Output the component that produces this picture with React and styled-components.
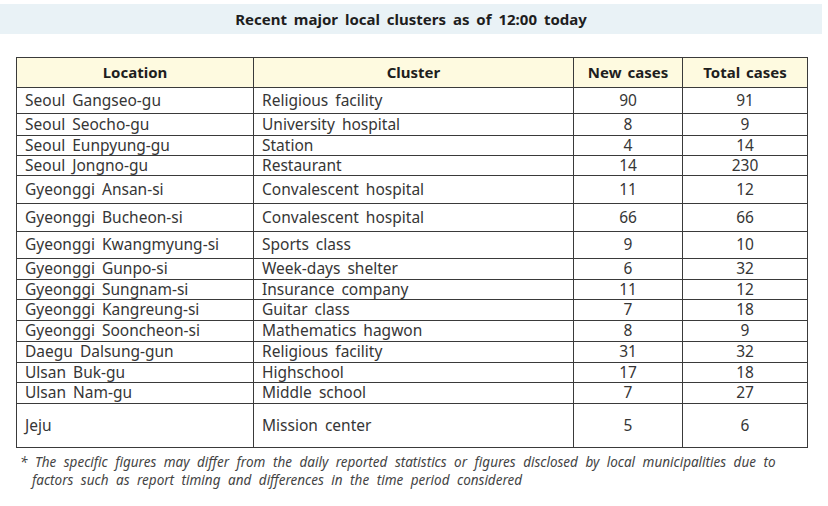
import React from 'react';
import styled, { createGlobalStyle } from 'styled-components';

const GlobalStyle = createGlobalStyle`
  body {
    margin: 0;
    background: #ffffff;
    font-family: "Noto Sans", "Open Sans", sans-serif;
    color: #333333;
  }
`;

const Page = styled.div`
  width: 828px;
  height: 506px;
  padding-top: 4px;
  box-sizing: border-box;
`;

const TitleBar = styled.div`
  width: 822px;
  height: 30px;
  background: #e9f2f6;
  display: flex;
  align-items: center;
  justify-content: center;
  font-size: 15px;
  font-weight: 700;
  color: #1e1e1e;
  word-spacing: 3px;
`;

const Table = styled.table`
  margin: 23px 0 0 16px;
  width: 791px;
  border-collapse: collapse;
  table-layout: fixed;
  font-size: 15.5px;
  word-spacing: 3px;
`;

const HeadCell = styled.th`
  background: #fefae0;
  border: 1px solid #3a3a3a;
  height: 29px;
  padding: 0;
  font-size: 15px;
  font-weight: 700;
  color: #1e1e1e;
  text-align: center;
  line-height: 1;
  word-spacing: 2px;
`;

const Row = styled.tr`
  height: ${p => p.$h}px;
`;

const Cell = styled.td`
  border: 1px solid #3a3a3a;
  padding: 0 0 0 ${p => (p.$num ? 0 : 8)}px;
  text-align: ${p => (p.$num ? 'center' : 'left')};
  line-height: 1;
  color: #363636;
  white-space: nowrap;
`;

const Note = styled.p`
  margin: 5px 0 0 20px;
  width: 770px;
  font-size: 13.5px;
  font-style: italic;
  line-height: 18px;
  color: #444444;
  word-spacing: 4px;
  padding-left: 12px;
  text-indent: -12px;
  box-sizing: border-box;
`;

const rows = [
  ['Seoul Gangseo-gu', 'Religious facility', 90, 91, 26],
  ['Seoul Seocho-gu', 'University hospital', 8, 9, 22],
  ['Seoul Eunpyung-gu', 'Station', 4, 14, 20],
  ['Seoul Jongno-gu', 'Restaurant', 14, 230, 20],
  ['Gyeonggi Ansan-si', 'Convalescent hospital', 11, 12, 28],
  ['Gyeonggi Bucheon-si', 'Convalescent hospital', 66, 66, 28],
  ['Gyeonggi Kwangmyung-si', 'Sports class', 9, 10, 27],
  ['Gyeonggi Gunpo-si', 'Week-days shelter', 6, 32, 21],
  ['Gyeonggi Sungnam-si', 'Insurance company', 11, 12, 20],
  ['Gyeonggi Kangreung-si', 'Guitar class', 7, 18, 21],
  ['Gyeonggi Sooncheon-si', 'Mathematics hagwon', 8, 9, 21],
  ['Daegu Dalsung-gun', 'Religious facility', 31, 32, 21],
  ['Ulsan Buk-gu', 'Highschool', 17, 18, 20],
  ['Ulsan Nam-gu', 'Middle school', 7, 27, 21],
  ['Jeju', 'Mission center', 5, 6, 44],
];

const App = () => (
  <Page>
    <GlobalStyle />
    <TitleBar>Recent major local clusters as of 12:00 today</TitleBar>
    <Table>
      <colgroup>
        <col style={{ width: 237 }} />
        <col style={{ width: 320 }} />
        <col style={{ width: 109 }} />
        <col style={{ width: 125 }} />
      </colgroup>
      <thead>
        <tr>
          <HeadCell>Location</HeadCell>
          <HeadCell>Cluster</HeadCell>
          <HeadCell>New cases</HeadCell>
          <HeadCell>Total cases</HeadCell>
        </tr>
      </thead>
      <tbody>
        {rows.map(([loc, cluster, nw, total, h]) => (
          <Row key={loc} $h={h}>
            <Cell>{loc}</Cell>
            <Cell>{cluster}</Cell>
            <Cell $num>{nw}</Cell>
            <Cell $num>{total}</Cell>
          </Row>
        ))}
      </tbody>
    </Table>
    <Note>
      * The specific figures may differ from the daily reported statistics or figures disclosed by local municipalities due to
      factors such as report timing and differences in the time period considered
    </Note>
  </Page>
);

export default App;
